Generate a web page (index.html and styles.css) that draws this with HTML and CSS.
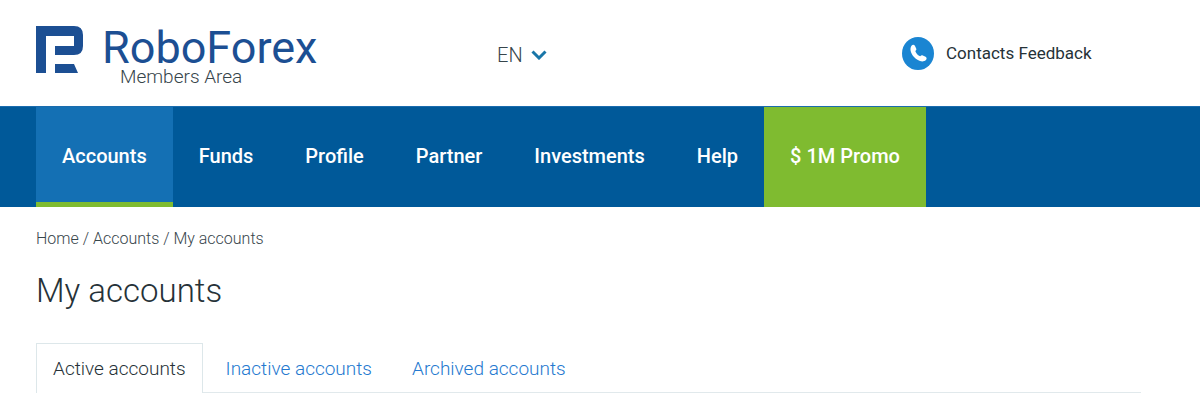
FILE: index.html
```html
<!DOCTYPE html>
<html lang="en">
<head>
<meta charset="utf-8">
<meta name="viewport" content="width=device-width, initial-scale=1">
<title>My accounts</title>
<link rel="stylesheet" href="styles.css">
</head>
<body>
<header class="header wrap">
  <a class="brand" href="#">
    <svg class="brand-mark" viewBox="0 0 48 48" aria-hidden="true"><path d="M0 0H38Q47 0 47 9V20Q47 29 38 29H19V20H38V10H10V47H0ZM19 38H38L42 47H19Z"/></svg>
    <span class="brand-text"><span class="brand-name">RoboForex</span><span class="brand-area">Members Area</span></span>
  </a>
  <button class="language" type="button">EN
    <svg class="chevron" viewBox="0 0 16 10" aria-hidden="true"><path d="M1.500 1.500L8 8L14.500 1.500"/></svg>
  </button>
  <a class="contacts" href="#">
    <svg class="phone" viewBox="0 0 32 33" aria-hidden="true"><ellipse cx="16" cy="16.500" rx="16" ry="16.500"/><path d="M9.500 8.700C10.500 7.500 12.300 7.500 13 9L14.200 11.600C14.700 12.800 14.100 13.300 13.300 14.100C13.800 16.200 16.100 18.600 18.200 19.300C19.100 18.500 19.700 18 20.800 18.500L23.600 19.800C24.900 20.500 24.900 22 23.900 23C20.500 26.200 15.200 23.500 12 20C8.900 16.600 7.300 12 9.500 8.700Z"/></svg>
    <span>Contacts Feedback</span>
  </a>
</header>
<nav class="nav">
  <ul class="nav-list wrap">
    <li><a class="nav-link nav-active" href="#" aria-current="page">Accounts</a></li>
    <li><a class="nav-link" href="#">Funds</a></li>
    <li><a class="nav-link" href="#">Profile</a></li>
    <li><a class="nav-link" href="#">Partner</a></li>
    <li><a class="nav-link" href="#">Investments</a></li>
    <li><a class="nav-link" href="#">Help</a></li>
    <li><a class="nav-link nav-promo" href="#">$ 1M Promo</a></li>
  </ul>
</nav>
<main class="wrap">
  <div class="breadcrumbs"><a href="#">Home</a> / <a href="#">Accounts</a> / <span>My accounts</span></div>
  <h1 class="title">My accounts</h1>
  <div class="tabs">
    <a class="tab tab-active" href="#">Active accounts</a>
    <a class="tab" href="#">Inactive accounts</a>
    <a class="tab" href="#">Archived accounts</a>
  </div>
</main>
</body>
</html>
```
FILE: styles.css
```css
* { box-sizing: border-box; }
body {
  margin: 0;
  background: #fff;
  color: #263238;
  font-family: Roboto, "Noto Sans", sans-serif;
}
a { color: inherit; text-decoration: none; }
.wrap { padding: 0 59px 0 36px; }
.header {
  display: grid;
  grid-template-columns: 461fr 405fr 239fr;
  height: 106px;
}
.brand { display: flex; gap: 18px; padding-top: 26px; }
.brand-mark { width: 48px; height: 48px; fill: #1c4f93; flex: none; }
.brand-text { display: flex; flex-direction: column; }
.brand-name { color: #1c4f93; font-size: 45px; line-height: 44px; }
.brand-area { padding-left: 18px; color: #37454b; font-size: 19px; font-weight: 300; line-height: 14px; }
.language {
  display: flex;
  align-items: center;
  align-self: center;
  justify-self: start;
  gap: 8px;
  padding: 4px 0 0;
  border: 0;
  background: none;
  color: #37454b;
  font: 300 20px/24px Roboto, sans-serif;
}
.chevron { width: 16px; height: 10px; fill: none; stroke: #1976a8; stroke-width: 3; }
.contacts { display: flex; align-items: center; gap: 12px; font-size: 17px; }
.phone { width: 32px; height: 33px; fill: #fff; flex: none; }
.phone ellipse { fill: #1a85d2; }
.nav { background: #005999; border-top: 1px solid #1a6cae; }
.nav-list { display: flex; margin: 0; list-style: none; }
.nav-link {
  display: block;
  padding: 38px 26px 34px;
  border-bottom: 5px solid transparent;
  color: #fff;
  font-size: 20px;
  font-weight: 500;
  line-height: 23px;
}
.nav-active { background: #1470b4; border-color: #7fbb30; }
.nav-promo { background: #7fbb30; }
.breadcrumbs { padding-top: 22px; color: #37454b; font-size: 16px; font-weight: 300; line-height: 20px; }
.title { margin: 22px 0 32px; font-size: 33px; font-weight: 300; line-height: 40px; }
.tabs { display: flex; gap: 6px; border-bottom: 1px solid #e1e9ec; }
.tab { padding: 12px 16px 10px; border: 1px solid transparent; border-bottom: 0; color: #2579cf; font-size: 19px; font-weight: 300; line-height: 26px; }
.tab-active { margin-bottom: -1px; border-color: #dde7ea; background: #fff; color: #263238; }
```
